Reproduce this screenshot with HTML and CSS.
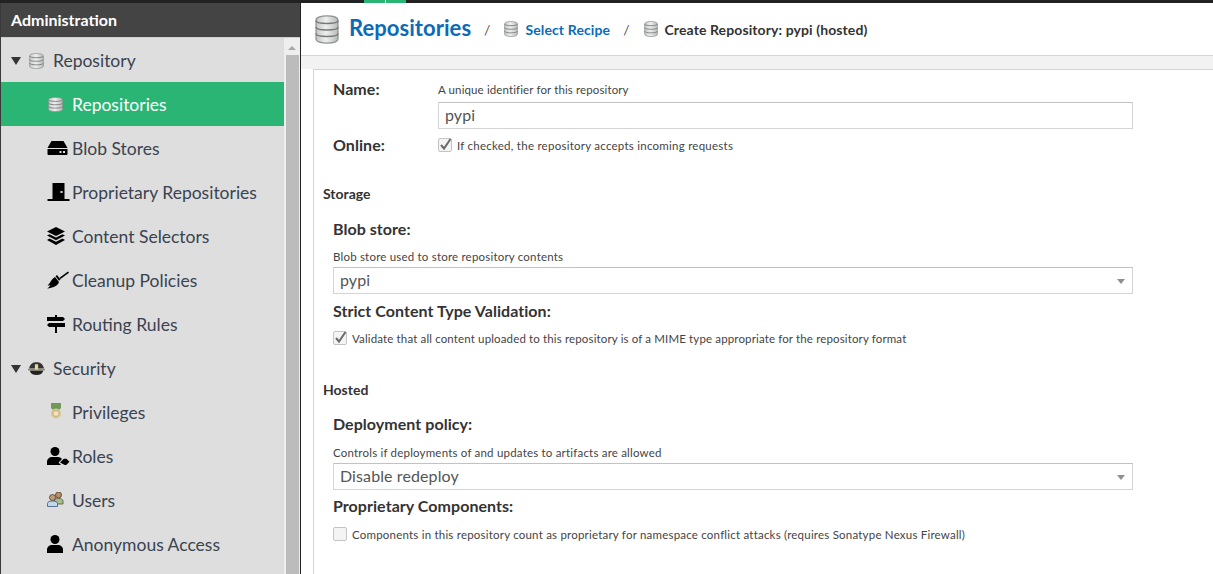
FILE: index.html
```html
<!DOCTYPE html>
<html lang="en">
<head>
    <meta charset="UTF-8">
    <title>Create Repository: pypi (hosted)</title>
    <link rel="stylesheet" href="styles.css">
</head>
<body>
    <!-- shared icons -->
    <svg class="icon-defs" width="0" height="0">
        <defs>
            <linearGradient id="silver" x1="0" y1="0" x2="1" y2="0">
                <stop offset="0" stop-color="#c4c6c6"/>
                <stop offset="0.45" stop-color="#eeeeee"/>
                <stop offset="1" stop-color="#b8baba"/>
            </linearGradient>
            <symbol id="i-db" viewBox="0 0 24 29" preserveAspectRatio="none">
                <path d="M1 5c0-5.500 22-5.500 22 0v19c0 5.500-22 5.500-22 0z" fill="url(#silver)" stroke="#8f9292" stroke-width="1.200"/>
                <path d="M1 5.500c0 4 22 4 22 0M1 12c0 4 22 4 22 0M1 18.500c0 4 22 4 22 0" fill="none" stroke="#777a7a" stroke-width="1.500"/>
            </symbol>
            <symbol id="i-blob" viewBox="0 0 20 14">
                <path d="M4 0h12l4 7H0z" fill="#000"/>
                <path d="M0 8h20v5a1 1 0 0 1-1 1H1a1 1 0 0 1-1-1z" fill="#000"/>
                <path d="M12 10h2v2h-2zM15.500 10h2v2h-2z" fill="#ddd"/>
            </symbol>
            <symbol id="i-door" viewBox="0 0 22 18">
                <path d="M5 0h12v16h5v2H0v-2h5z" fill="#000"/>
                <rect x="13" y="8" width="2" height="2" fill="#ddd"/>
            </symbol>
            <symbol id="i-layers" viewBox="0 0 18 18">
                <path d="M9 0l9 4.500-9 4.500-9-4.500z" fill="#000"/>
                <path d="M2.500 7.200L9 10.500l6.500-3.300L18 8.600 9 13.200 0 8.600z" fill="#000"/>
                <path d="M2.500 11.500L9 14.800l6.500-3.300L18 13 9 18 0 13z" fill="#000"/>
            </symbol>
            <symbol id="i-broom" viewBox="0 0 22 18">
                <path d="M21 .5l1 1.200-8.500 6.300-1-1.200z" fill="#000"/>
                <path d="M10 4l3.500 4.500-1.500 1.200L8.500 5.200z" fill="#000"/>
                <path d="M8 6l4 5c-1.500 4-6 6-12 6.500 2-1 3-2.500 3.500-3.500-1 .5-2 .5-3 .5C3 13 4 8 8 6z" fill="#000"/>
            </symbol>
            <symbol id="i-signs" viewBox="0 0 18 18">
                <path d="M8 0h2v2h6l2 2-2 2H0V2h8z" fill="#000"/>
                <path d="M2 8h16v4H10v6H8v-6H2l-2-2z" fill="#000"/>
            </symbol>
            <symbol id="i-cap" viewBox="0 0 16 12">
                <path d="M1 6C2 1 5 0 8 0s6 1 7 6z" fill="#333"/>
                <rect x="0" y="6" width="16" height="2" rx="1" fill="#8f8c78"/>
                <path d="M2 8h12v1c-1 2-3 3-6 3s-5-1-6-3z" fill="#222"/>
                <rect x="6.500" y="2" width="3" height="5" fill="#e8d9a0"/>
            </symbol>
            <symbol id="i-medal" viewBox="0 0 12 16">
                <path d="M1 0h10v5L8 8H4L1 5z" fill="#6f9a5a"/>
                <circle cx="6" cy="10.500" r="5" fill="#d8c48f"/>
                <circle cx="6" cy="10.500" r="2.800" fill="#f0e6c6" stroke="#b9a36c" stroke-width=".6"/>
            </symbol>
            <symbol id="i-role" viewBox="0 0 23 18">
                <circle cx="8" cy="4.500" r="4.500" fill="#000"/>
                <path d="M0 18v-3c0-3 2.500-5 5-5h6c1.500 0 3 .8 4 2l-3.500 3.500L14 18z" fill="#000"/>
                <path d="M13 15.500l3.500-3.500a1 1 0 0 1 .7-.3h2.300l3 3-3.800 3.800z" fill="#000"/>
            </symbol>
            <symbol id="i-users" viewBox="0 0 17 15">
                <circle cx="11.500" cy="3" r="3" fill="#b98d68" stroke="#4a3a2c" stroke-width=".8"/>
                <path d="M7 12V9c0-1.500 1.500-2.500 4.500-2.500S16 7.500 16 9v3z" fill="#a9bd8a" stroke="#4c5b3a" stroke-width=".8"/>
                <circle cx="5.500" cy="5.500" r="3" fill="#c69a74" stroke="#4a3a2c" stroke-width=".8"/>
                <path d="M.5 14.500v-3c0-1.500 2-2.500 5-2.500s5 1 5 2.500v3z" fill="#c3d6ea" stroke="#3d5673" stroke-width=".8"/>
            </symbol>
            <symbol id="i-user" viewBox="0 0 16 18">
                <circle cx="8" cy="4.500" r="4.500" fill="#000"/>
                <path d="M0 18v-3.500C0 12 2.500 10 5 10h6c2.500 0 5 2 5 4.500V18z" fill="#000"/>
            </symbol>
        </defs>
    </svg>

    <div class="topbar"><span class="nav-marker"></span></div>

    <div class="app">
        <aside class="sidebar">
            <h2 class="sidebar-title">Administration</h2>
            <div class="sidebar-body">
                <ul class="tree">
                    <li class="tree-row tree-parent"><span class="caret"></span><svg class="ic ic-db-small"><use href="#i-db"/></svg>Repository</li>
                    <li class="tree-row tree-child selected"><svg class="ic ic-db-child"><use href="#i-db"/></svg>Repositories</li>
                    <li class="tree-row tree-child"><svg class="ic ic-blob"><use href="#i-blob"/></svg>Blob Stores</li>
                    <li class="tree-row tree-child"><svg class="ic ic-door"><use href="#i-door"/></svg>Proprietary Repositories</li>
                    <li class="tree-row tree-child"><svg class="ic ic-layers"><use href="#i-layers"/></svg>Content Selectors</li>
                    <li class="tree-row tree-child"><svg class="ic ic-broom"><use href="#i-broom"/></svg>Cleanup Policies</li>
                    <li class="tree-row tree-child"><svg class="ic ic-signs"><use href="#i-signs"/></svg>Routing Rules</li>
                    <li class="tree-row tree-parent"><span class="caret"></span><svg class="ic ic-cap"><use href="#i-cap"/></svg>Security</li>
                    <li class="tree-row tree-child"><svg class="ic ic-medal"><use href="#i-medal"/></svg>Privileges</li>
                    <li class="tree-row tree-child"><svg class="ic ic-role"><use href="#i-role"/></svg>Roles</li>
                    <li class="tree-row tree-child"><svg class="ic ic-users"><use href="#i-users"/></svg>Users</li>
                    <li class="tree-row tree-child"><svg class="ic ic-user"><use href="#i-user"/></svg>Anonymous Access</li>
                </ul>
                <div class="scrollbar">
                    <span class="scroll-up"></span>
                    <span class="scroll-thumb"></span>
                </div>
            </div>
        </aside>

        <main class="content">
            <header class="crumbs">
                <svg class="ic-title"><use href="#i-db"/></svg>
                <span class="crumb-title">Repositories</span>
                <span class="crumb-sep">/</span>
                <svg class="ic-crumb"><use href="#i-db"/></svg>
                <span class="crumb-link">Select Recipe</span>
                <span class="crumb-sep">/</span>
                <svg class="ic-crumb"><use href="#i-db"/></svg>
                <span class="crumb-current">Create Repository: pypi (hosted)</span>
            </header>

            <div class="band"></div>

            <form class="card">
                <div class="inline-field name-field">
                    <label class="field-label">Name:</label>
                    <div class="field-col">
                        <p class="help">A unique identifier for this repository</p>
                        <div class="input">pypi</div>
                    </div>
                </div>
                <div class="inline-field online-field">
                    <label class="field-label">Online:</label>
                    <div class="check-row">
                        <span class="check"><svg viewBox="0 0 14 14"><path d="M3 7l3 3.500L12.500 1" fill="none" stroke="#6a6a6a" stroke-width="2"/></svg></span>
                        If checked, the repository accepts incoming requests
                    </div>
                </div>

                <h3 class="section-title storage-title">Storage</h3>
                <div class="field-col section-body storage-body">
                    <label class="field-label">Blob store:</label>
                    <p class="help help-block">Blob store used to store repository contents</p>
                    <div class="input select">pypi<span class="select-arrow"></span></div>
                    <label class="field-label label-after">Strict Content Type Validation:</label>
                    <div class="check-row check-block">
                        <span class="check"><svg viewBox="0 0 14 14"><path d="M3 7l3 3.500L12.500 1" fill="none" stroke="#6a6a6a" stroke-width="2"/></svg></span>
                        Validate that all content uploaded to this repository is of a MIME type appropriate for the repository format
                    </div>
                </div>

                <h3 class="section-title hosted-title">Hosted</h3>
                <div class="field-col section-body hosted-body">
                    <label class="field-label">Deployment policy:</label>
                    <p class="help help-block">Controls if deployments of and updates to artifacts are allowed</p>
                    <div class="input select">Disable redeploy<span class="select-arrow"></span></div>
                    <label class="field-label label-after">Proprietary Components:</label>
                    <div class="check-row check-block">
                        <span class="check"></span>
                        Components in this repository count as proprietary for namespace conflict attacks (requires Sonatype Nexus Firewall)
                    </div>
                </div>
            </form>
        </main>
    </div>
</body>
</html>
```

FILE: styles.css
```css
:root {
    --dark: #222222;
    --header: #444444;
    --tree-bg: #dedede;
    --green: #2ab574;
    --blue: #0b6bb8;
    --text: #333333;
    --line: #d4d4d4;
}

* {
    box-sizing: border-box;
    margin: 0;
    padding: 0;
}

html, body {
    height: 100%;
    overflow: hidden;
}

body {
    font-family: Lato, "Open Sans", Arial, sans-serif;
    color: var(--text);
    background: #ffffff;
    display: flex;
    flex-direction: column;
}

.icon-defs {
    position: absolute;
}

/* --- Top bar --- */
.topbar {
    height: 3px;
    flex: none;
    background: var(--dark);
    position: relative;
}

.nav-marker {
    position: absolute;
    left: 364px;
    top: 0;
    width: 42px;
    height: 3px;
    background: linear-gradient(to right, var(--green) 49%, #ffffff 49%, #ffffff 53%, var(--green) 53%);
}

.app {
    flex: 1;
    display: flex;
    min-height: 0;
}

/* --- Sidebar --- */
.sidebar {
    width: 301px;
    flex: none;
    display: flex;
    flex-direction: column;
    border-left: 1px solid #3a3a3a;
    border-right: 1px solid var(--dark);
}

.sidebar-title {
    height: 35px;
    flex: none;
    background: var(--header);
    border-bottom: 1px solid #cfcfcf;
    color: #ffffff;
    font-size: 16px;
    font-weight: 700;
    line-height: 34px;
    padding-left: 10px;
}

.sidebar-body {
    flex: 1;
    display: flex;
    min-height: 0;
    background: #eeeeee;
}

.tree {
    list-style: none;
    width: 283px;
    flex: none;
    background: var(--tree-bg);
}

.tree-row {
    height: 44px;
    display: flex;
    align-items: center;
    font-size: 17.500px;
    line-height: 22px;
    color: #3a4350;
    position: relative;
    padding-top: 1px;
}

.tree-parent {
    padding-left: 52px;
}

.tree-child {
    padding-left: 71px;
}

.selected {
    background: var(--green);
    color: #ffffff;
}

.caret {
    position: absolute;
    left: 10px;
    top: 19px;
    border-left: 5px solid transparent;
    border-right: 5px solid transparent;
    border-top: 8px solid #333333;
}

.ic {
    position: absolute;
}

.ic-db-small { left: 28px; top: 15px; width: 15px; height: 16px; }
.ic-db-child { left: 47px; top: 15px; width: 15px; height: 15px; }
.ic-blob { left: 46px; top: 15px; width: 21px; height: 14px; }
.ic-door { left: 46px; top: 13px; width: 23px; height: 18px; }
.ic-layers { left: 46px; top: 13px; width: 18px; height: 18px; }
.ic-broom { left: 46px; top: 13px; width: 22px; height: 18px; }
.ic-signs { left: 46px; top: 13px; width: 18px; height: 18px; }
.ic-cap { left: 27px; top: 16px; width: 17px; height: 13px; }
.ic-medal { left: 49px; top: 13px; width: 12px; height: 16px; }
.ic-role { left: 46px; top: 13px; width: 23px; height: 18px; }
.ic-users { left: 46px; top: 14px; width: 17px; height: 15px; }
.ic-user { left: 46px; top: 13px; width: 16px; height: 18px; }

.scrollbar {
    flex: 1;
    padding: 0 1px 0 2px;
    display: flex;
    flex-direction: column;
    align-items: stretch;
}

.scroll-up {
    height: 17px;
    flex: none;
    position: relative;
}

.scroll-up::after {
    content: "";
    position: absolute;
    left: 2px;
    top: 8px;
    border-left: 4px solid transparent;
    border-right: 4px solid transparent;
    border-bottom: 4px solid #a8a8a8;
}

.scroll-thumb {
    flex: 1;
    background: #bcbcbc;
}

/* --- Main content --- */
.content {
    flex: 1;
    min-width: 0;
    display: flex;
    flex-direction: column;
}

.crumbs {
    height: 53px;
    flex: none;
    display: flex;
    align-items: center;
    padding-left: 14px;
    border-bottom: 1px solid var(--line);
}

.ic-title {
    width: 24px;
    height: 29px;
    margin-right: 10px;
}

.ic-crumb {
    width: 14px;
    height: 16px;
    margin-right: 7px;
}

.crumb-title {
    font-size: 22px;
    font-weight: 700;
    letter-spacing: .05px;
    color: var(--blue);
    padding-bottom: 4px;
}

.crumb-sep {
    font-size: 14px;
    color: #555555;
    margin: 0 14px 0 13px;
}

.crumb-link {
    font-size: 14px;
    font-weight: 700;
    letter-spacing: .12px;
    color: var(--blue);
}

.crumb-current {
    font-size: 14px;
    font-weight: 700;
    letter-spacing: .1px;
    color: #333333;
}

.band {
    height: 13px;
    flex: none;
    background: #f2f2f2;
}

/* --- Form card --- */
.card {
    flex: 1;
    margin-left: 12px;
    border-top: 1px solid var(--line);
    border-left: 1px solid var(--line);
    padding: 10px 0 0 9px;
    position: relative;
}

.inline-field {
    display: flex;
    padding-left: 10px;
}

.inline-field .field-label {
    width: 105px;
    flex: none;
}

.field-label {
    display: block;
    font-size: 16px;
    line-height: 18px;
    letter-spacing: .05px;
    font-weight: 700;
    color: var(--text);
}

.field-col {
    display: flex;
    flex-direction: column;
}

.help {
    font-size: 11.500px;
    letter-spacing: .2px;
    color: #444444;
    line-height: 14px;
    margin-bottom: 4px;
}

.input {
    width: 695px;
    height: 27px;
    border: 1px solid var(--line);
    border-top-color: #c2c2c2;
    font-size: 16px;
    letter-spacing: .1px;
    line-height: 24px;
    padding-left: 6px;
    color: #555555;
    position: relative;
}

.select {
    width: 800px;
}

.select-arrow {
    position: absolute;
    right: 7px;
    top: 11px;
    border-left: 4px solid transparent;
    border-right: 4px solid transparent;
    border-top: 5px solid #909090;
}

.check-row {
    display: flex;
    align-items: center;
    gap: 5px;
    font-size: 11.500px;
    letter-spacing: .25px;
    color: #444444;
}

.check {
    width: 14px;
    height: 14px;
    flex: none;
    border: 1px solid #c4c4c4;
    border-radius: 2px;
    background: #f4f4f4;
    display: block;
}

.check svg {
    display: block;
    width: 14px;
    height: 14px;
    margin: -1px;
}

.name-field .field-col {
    padding-top: 3px;
}

.name-field .help {
    margin-bottom: 5px;
    letter-spacing: .12px;
}

.online-field {
    margin-top: 7px;
}

.section-title {
    font-size: 14px;
    line-height: 16px;
    font-weight: 700;
    color: var(--text);
}

.storage-title {
    margin-top: 32px;
}

.hosted-title {
    margin-top: 37px;
    margin-bottom: -1px;
}

.section-body {
    padding-left: 10px;
}

.section-body > .field-label:first-child {
    margin-top: 18px;
}

.help-block {
    margin-top: 12px;
    margin-bottom: 3px;
}

.label-after {
    margin-top: 8px;
}

.check-block {
    margin-top: 11px;
}

.storage-body .check-block {
    letter-spacing: .14px;
}

.hosted-body .help-block {
    margin-top: 13px;
}

.hosted-body .label-after {
    margin-top: 7px;
}

.hosted-body .check-block {
    margin-top: 12px;
    letter-spacing: .21px;
}
```
